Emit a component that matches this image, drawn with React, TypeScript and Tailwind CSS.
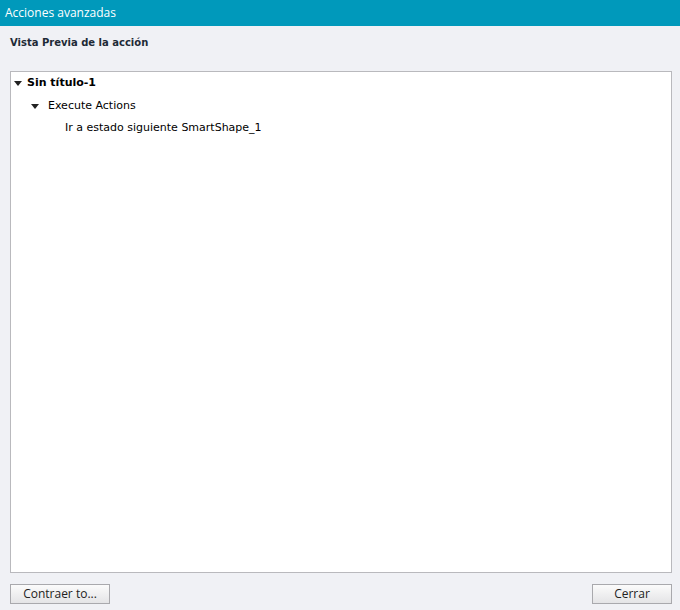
const Caret = () => (
  <svg width="8" height="5" viewBox="0 0 8 5" className="shrink-0">
    <polygon points="0,0 8,0 4,5" fill="#222" />
  </svg>
);

export default function App() {
  return (
    <div className="flex h-[610px] w-[680px] flex-col bg-[#f0f1f5] [font-family:'DejaVu_Sans',Verdana,sans-serif] text-black">
      {/* barra de título */}
      <div className="flex h-[26px] shrink-0 items-center bg-[#0099bb] px-[5px] [font-family:'Open_Sans',sans-serif] text-[12px] text-white">
        Acciones avanzadas
      </div>

      <div className="flex flex-1 flex-col pl-[10px] pr-[8px]">
        <div className="pt-[9px] text-[10px] font-bold text-[#1e2a36]">Vista Previa de la acción</div>

        {/* árbol de acciones */}
        <div className="mt-[21px] h-[502px] border border-[#b9b9bd] bg-white text-[11px]">
          <div className="flex items-center gap-[5px] pl-[3px] leading-[22px]">
            <Caret />
            <span className="font-bold">Sin título-1</span>
          </div>
          <div className="mt-[1px] flex items-center gap-[9px] pl-[20px] leading-[22px]">
            <Caret />
            <span>Execute Actions</span>
          </div>
          <div className="pl-[54px] leading-[22px]">Ir a estado siguiente SmartShape_1</div>
        </div>

        <div className="mt-[11px] flex justify-between">
          <button className="h-[20px] w-[100px] border border-[#a9a9ad] bg-gradient-to-b from-[#fbfbfb] to-[#e4e4e6] [font-family:'Open_Sans',sans-serif] text-[12px] leading-none text-[#222]">
            Contraer to...
          </button>
          <button className="h-[20px] w-[80px] border border-[#a9a9ad] bg-gradient-to-b from-[#fbfbfb] to-[#e4e4e6] [font-family:'Open_Sans',sans-serif] text-[12px] leading-none text-[#222]">
            Cerrar
          </button>
        </div>
      </div>
    </div>
  );
}
